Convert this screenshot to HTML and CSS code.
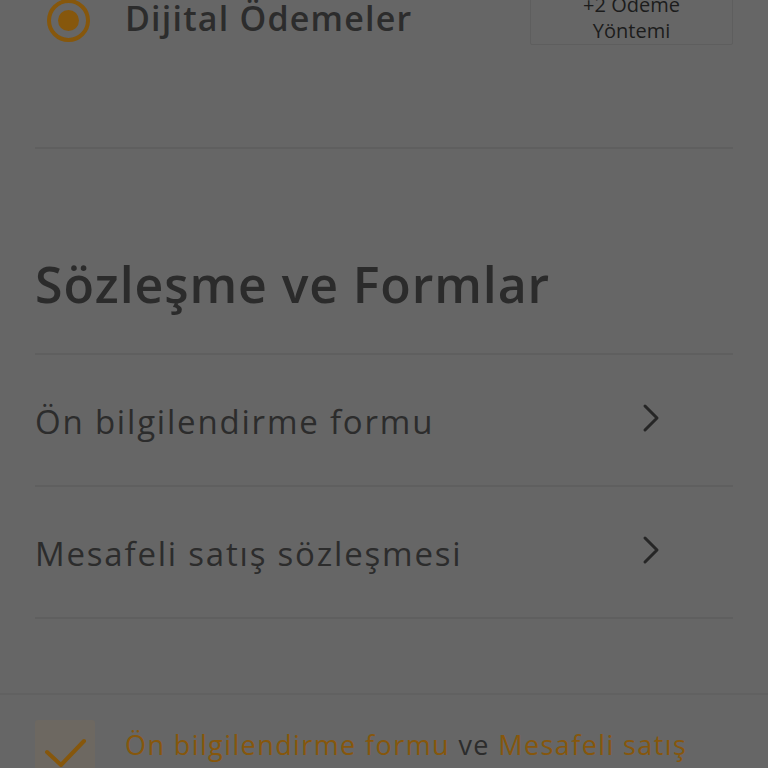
FILE: index.html
```html
<!DOCTYPE html>
<html lang="tr">
<head>
<meta charset="utf-8">
<title>Ödeme</title>
<link rel="stylesheet" href="styles.css">
</head>
<body>
<div class="content">
  <div class="pay-row">
    <span class="radio"><span class="radio-dot"></span></span>
    <span class="pay-label">Dijital Ödemeler</span>
    <button class="more-btn">+2 Ödeme<br>Yöntemi</button>
  </div>
  <div class="divider"></div>
  <div class="section-head">
    <h2 class="section-title">Sözleşme ve Formlar</h2>
  </div>
  <div class="divider"></div>
  <a class="form-row">
    <span class="form-label">Ön bilgilendirme formu</span>
    <svg class="chev" width="18" height="30" viewBox="0 0 18 30"><path d="M3 3 L15 15 L3 27" fill="none" stroke="#262626" stroke-width="3" stroke-linecap="round" stroke-linejoin="round"/></svg>
  </a>
  <a class="form-row">
    <span class="form-label">Mesafeli satış sözleşmesi</span>
    <svg class="chev" width="18" height="30" viewBox="0 0 18 30"><path d="M3 3 L15 15 L3 27" fill="none" stroke="#262626" stroke-width="3" stroke-linecap="round" stroke-linejoin="round"/></svg>
  </a>
</div>
<footer class="agree-bar">
  <span class="checkbox">
    <svg width="60" height="60" viewBox="0 0 60 60"><path d="M12 32 L26 45 L49 21" fill="none" stroke="#86570c" stroke-width="4" stroke-linecap="round" stroke-linejoin="round"/></svg>
  </span>
  <p class="agree-text"><span class="link">Ön bilgilendirme formu</span> ve <span class="link">Mesafeli satış</span> sözleşmesini okudum, onaylıyorum.</p>
</footer>
</body>
</html>
```
FILE: styles.css
```css
html, body {
  margin: 0;
  padding: 0;
  height: 768px;
  overflow: hidden;
  background: #666666;
  font-family: "Open Sans", "Noto Sans", sans-serif;
  color: #2a2a2a;
}
.content {
  padding: 0 35px;
}
.pay-row {
  margin-top: -22px;
  height: 80px;
  margin-bottom: 89px;
  display: flex;
  align-items: center;
}
.radio {
  box-sizing: border-box;
  width: 43px;
  height: 43px;
  margin-left: 12px;
  border: 4.5px solid #86570c;
  border-radius: 50%;
  display: flex;
  align-items: center;
  justify-content: center;
  margin-top: 4px;
}
.radio-dot {
  width: 21px;
  height: 21px;
  border-radius: 50%;
  background: #86570c;
}
.pay-label {
  margin-left: 35px;
  font-size: 34px;
  font-weight: 600;
  letter-spacing: 1.2px;
  color: #2c2c2c;
  flex: 1;
}
.more-btn {
  align-self: flex-start;
  margin-top: 1px;
  box-sizing: border-box;
  width: 203px;
  height: 66px;
  padding: 12px 0 0;
  background: transparent;
  border: 1px solid #5e5e5e;
  border-radius: 2px;
  font-family: inherit;
  font-size: 20px;
  line-height: 26px;
  color: #1c1c1c;
}
.divider {
  height: 2px;
  background: #5f5f5f;
}
.section-head {
  height: 204px;
  box-sizing: border-box;
  padding-top: 105px;
}
.section-title {
  margin: 0;
  font-size: 50px;
  line-height: 60px;
  font-weight: 600;
  letter-spacing: 0.9px;
  color: #2b2b2b;
}
.form-row {
  height: 130px;
  display: flex;
  align-items: center;
  justify-content: space-between;
  padding-right: 73px;
  border-bottom: 2px solid #5f5f5f;
  color: #2c2c2c;
}
.form-label {
  font-size: 33px;
  font-weight: 400;
  letter-spacing: 1.8px;
  margin-top: 2px;
}
.chev {
  margin-top: -4px;
}
.agree-bar {
  position: absolute;
  left: 0;
  right: 0;
  top: 693px;
  border-top: 2px solid #616161;
  padding: 25px 35px 0;
  display: flex;
  gap: 30px;
  align-items: flex-start;
}
.checkbox {
  flex: none;
  width: 60px;
  height: 60px;
  background: #6d6861;
  border-radius: 3px;
}
.agree-text {
  margin: 0;
  font-size: 27px;
  line-height: 38px;
  letter-spacing: 1.4px;
  color: #2c2c2c;
  margin-top: 6px;
}
.link {
  color: #86570c;
}
```
